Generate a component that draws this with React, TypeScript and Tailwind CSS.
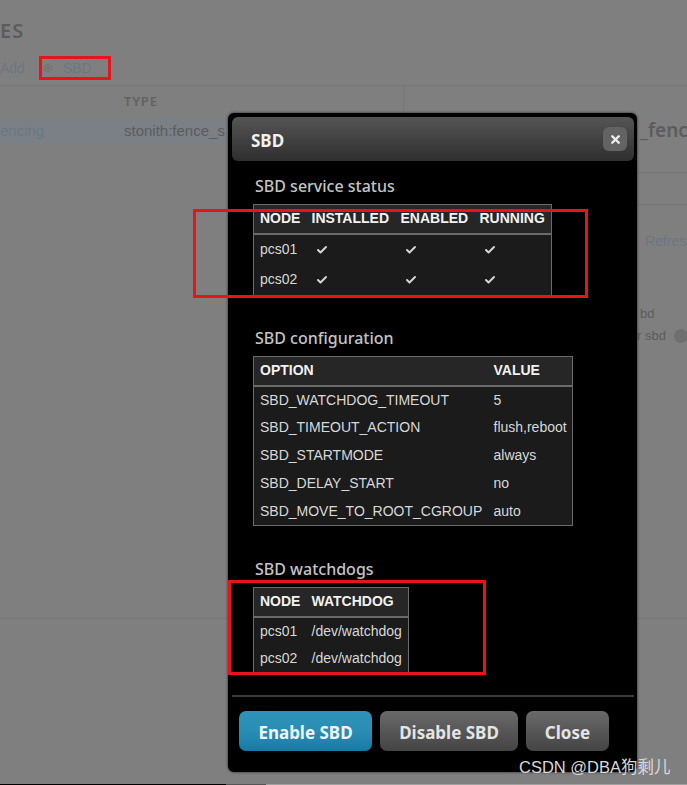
import { Check, Settings, X } from 'lucide-react'

const HEADING = "font-['Noto_Sans',sans-serif]"
const CELL = "font-['Liberation_Sans',sans-serif]"

const statusRows = ['pcs01', 'pcs02']

const configRows = [
  ['SBD_WATCHDOG_TIMEOUT', '5'],
  ['SBD_TIMEOUT_ACTION', 'flush,reboot'],
  ['SBD_STARTMODE', 'always'],
  ['SBD_DELAY_START', 'no'],
  ['SBD_MOVE_TO_ROOT_CGROUP', 'auto'],
]

function SectionTitle({ children, className = '' }: { children: React.ReactNode; className?: string }) {
  return <h3 className={`${HEADING} ml-[23px] text-[16px] leading-5 font-medium text-[#c4c4c4] ${className}`}>{children}</h3>
}

function Th({ children, className = '' }: { children: React.ReactNode; className?: string }) {
  return <th className={`h-[29px] border-b-2 border-[#6a6a6a] bg-[#262626] pl-[6px] text-left text-[14px] font-bold text-[#f2f2f2] ${className}`}>{children}</th>
}

function Td({ children, className = '' }: { children: React.ReactNode; className?: string }) {
  return <td className={`pl-[6px] text-[14px] text-[#d8d8d8] ${className}`}>{children}</td>
}

function Tick() {
  return <Check size={12} strokeWidth={4} className="ml-[4px] text-[#d4d4d4]" />
}

function Background() {
  return (
    <div className={`${CELL} text-[#5f5f5f]`}>
      <div className="h-[86px] border-b border-[#767676]">
        <div className={`${HEADING} pt-[18px] text-[20px] leading-[26px] font-semibold tracking-[1px] text-[#5c5c5c]`}>ES</div>
        <div className="mt-[14px] flex items-center text-[14px] leading-5 text-[#6c7782]">
          <span>Add</span>
          <Settings size={10} className="ml-[18px] text-[#6e6e6e]" />
          <span className="ml-[10px]">SBD</span>
        </div>
      </div>
      <div className="flex h-[32px] items-center pl-[124px]">
        <span className={`${HEADING} text-[13px] font-semibold tracking-[0.8px] text-[#626262]`}>TYPE</span>
      </div>
      <div className="relative flex h-[26px] w-[403px] items-center bg-[#7a8085] text-[15px]">
        <span className="w-[124px] text-[#6a7883]">encing</span>
        <span className="whitespace-nowrap text-[#5c5c5c]">stonith:fence_s</span>
      </div>
      <div className="mt-[474px] border-t border-[#767676]" />
    </div>
  )
}

function Modal() {
  return (
    <div className="absolute top-[113px] left-[228px] h-[659px] w-[409px] rounded-[6px] bg-black p-[4px] shadow-[0_0_3px_rgba(0,0,0,0.7)]">
      <div className="flex h-[44px] w-[402px] items-center justify-between rounded-[6px] bg-gradient-to-b from-[#555555] to-[#2f2f2f] pr-[7px] pl-[19px]">
        <span className={`${HEADING} pt-[3px] text-[17px] font-bold text-[#f0f0f0]`}>SBD</span>
        <button type="button" className="flex h-[24px] w-[24px] items-center justify-center rounded-[6px] bg-[#636363]">
          <X size={13} strokeWidth={4.5} className="text-[#ededed]" />
        </button>
      </div>

      <SectionTitle className="mt-[15px]">SBD service status</SectionTitle>
      <table className={`${CELL} mt-[8px] ml-[21px] w-[299px] border-collapse border border-[#6a6a6a] bg-[#1b1b1b]`}>
        <thead>
          <tr>
            <Th className="w-[52px]">NODE</Th>
            <Th className="w-[89px]">INSTALLED</Th>
            <Th className="w-[79px]">ENABLED</Th>
            <Th>RUNNING</Th>
          </tr>
        </thead>
        <tbody>
          {statusRows.map((node) => (
            <tr key={node} className="h-[31px]">
              <Td>{node}</Td>
              <Td><Tick /></Td>
              <Td><Tick /></Td>
              <Td><Tick /></Td>
            </tr>
          ))}
        </tbody>
      </table>

      <SectionTitle className="mt-[32px]">SBD configuration</SectionTitle>
      <table className={`${CELL} mt-[8px] ml-[21px] w-[320px] border-collapse border border-[#6a6a6a] bg-[#1b1b1b]`}>
        <thead>
          <tr>
            <Th className="w-[234px]">OPTION</Th>
            <Th>VALUE</Th>
          </tr>
        </thead>
        <tbody>
          {configRows.map(([option, value]) => (
            <tr key={option} className="h-[28px]">
              <Td>{option}</Td>
              <Td>{value}</Td>
            </tr>
          ))}
        </tbody>
      </table>

      <SectionTitle className="mt-[33px]">SBD watchdogs</SectionTitle>
      <table className={`${CELL} mt-[8px] ml-[21px] w-[156px] border-collapse border border-[#6a6a6a] bg-[#1b1b1b]`}>
        <thead>
          <tr>
            <Th className="w-[52px]">NODE</Th>
            <Th>WATCHDOG</Th>
          </tr>
        </thead>
        <tbody>
          {statusRows.map((node) => (
            <tr key={node} className="h-[28px]">
              <Td>{node}</Td>
              <Td>/dev/watchdog</Td>
            </tr>
          ))}
        </tbody>
      </table>

      <div className={`${HEADING} mt-[22px] flex w-[402px] gap-[8px] border-t-2 border-[#3c3c3c] pt-[14px] pl-[7px] text-[17px] font-bold`}>
        <button type="button" className="h-[40px] w-[133px] rounded-[7px] bg-gradient-to-b from-[#2f92b8] via-[#2a8db3] via-50% to-[#147ba6] pt-[3px] text-[#eef6fa]">
          Enable SBD
        </button>
        <button type="button" className="h-[40px] w-[138px] rounded-[7px] bg-gradient-to-b from-[#6a6a6a] to-[#444444] pt-[3px] text-[#e4e4e4]">
          Disable SBD
        </button>
        <button type="button" className="h-[40px] w-[83px] rounded-[7px] bg-gradient-to-b from-[#6a6a6a] to-[#444444] pt-[3px] text-[#e4e4e4]">
          Close
        </button>
      </div>
    </div>
  )
}

export default function App() {
  return (
    <div className="relative h-[785px] w-[687px] overflow-hidden bg-[#7f7f7f]">
      <Background />

      {/* bits of the page on the right of the dialog */}
      <div className={`${CELL} absolute top-[118px] left-[637px] w-[50px] text-[#5c5c5c]`}>
        <div className={`${HEADING} h-[55px] border-b border-[#767676] pl-[3px] text-[19px] leading-[24px] font-semibold whitespace-nowrap`}>_fenc</div>
        <div className="h-[32px] border-b border-[#767676]" />
        <div className="mt-[26px] pl-[8px] text-[14px] whitespace-nowrap text-[#6c7782]">Refres</div>
        <div className="mt-[52px] pl-[3px] text-[13px] leading-5">bd</div>
        <div className="mt-[2px] flex items-center whitespace-nowrap text-[13px] leading-5">
          <span>r sbd</span>
          <span className="ml-[8px] h-[14px] w-[14px] shrink-0 rounded-full bg-[#6f6f6f]" />
        </div>
      </div>
      <div className="absolute top-[86px] left-[403px] h-[27px] w-[1px] bg-[#767676]" />

      <Modal />

      {/* annotations drawn on the screenshot */}
      <div className="absolute top-[56px] left-[39px] h-[24px] w-[72px] border-[3px] border-[#e8141c]" />
      <div className="absolute top-[209px] left-[193px] h-[89px] w-[395px] border-[3px] border-[#e8141c]" />
      <div className="absolute top-[580px] left-[228px] h-[95px] w-[258px] border-[3px] border-[#e8141c]" />

      <div className="absolute top-[756px] left-[519px] font-['Liberation_Sans','Noto_Sans_CJK_SC',sans-serif] text-[16.5px] leading-[22px] whitespace-nowrap text-[#d9d9d9]">
        CSDN @DBA狗剩儿
      </div>

      {/* crop edge of the screenshot */}
      <div className="absolute bottom-0 left-0 flex h-[1px] w-full">
        <div className="w-[226px] bg-black" />
        <div className="w-[40px] bg-[#555555]" />
        <div className="flex-1 bg-[#a0a0a0]" />
      </div>
    </div>
  )
}
